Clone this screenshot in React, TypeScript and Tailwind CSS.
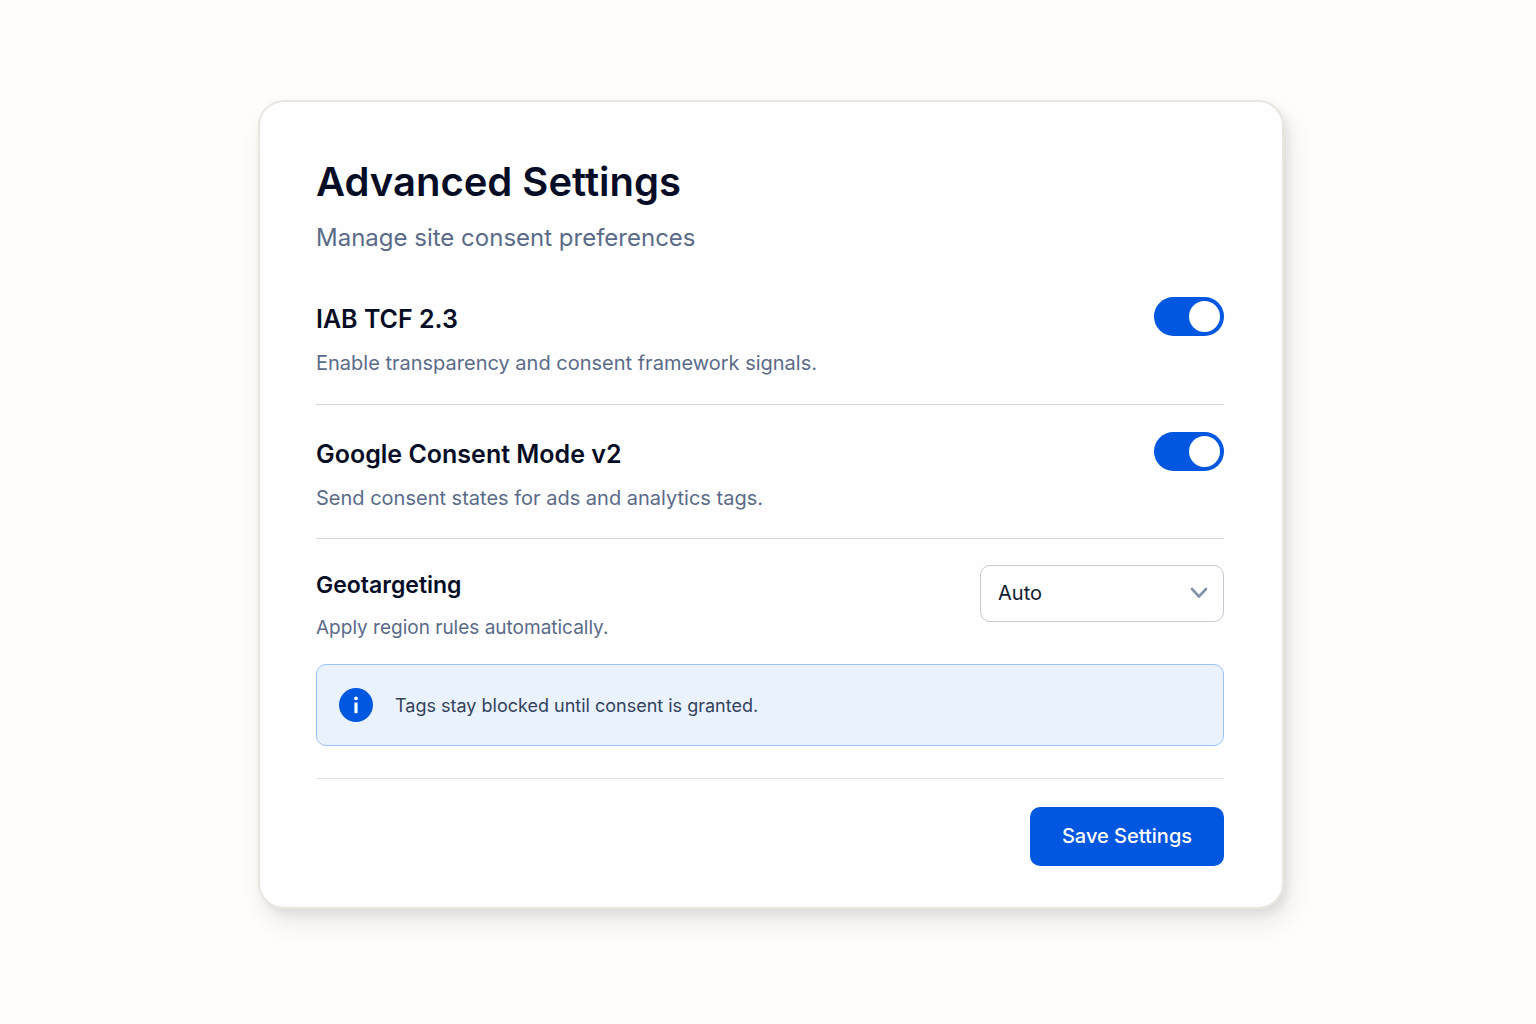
import { useId, useState } from 'react'
import type { ReactNode } from 'react'

const REGION_OPTIONS = ['Auto', 'EU only', 'Worldwide']

interface SettingRowProps {
  id: string
  title: string
  description: string
  compact?: boolean
  className?: string
  children: ReactNode
}

function SettingRow({ id, title, description, compact = false, className = '', children }: SettingRowProps) {
  return (
    <div className={`flex items-start justify-between gap-6 ${className}`}>
      <div className={compact ? 'min-w-0 pt-1' : 'min-w-0 pt-1.5'}>
        <label
          htmlFor={id}
          className={`block leading-8 font-semibold text-[#050d26] ${compact ? 'text-[23px]' : 'text-[25px]'}`}
        >
          {title}
        </label>
        <p
          id={`${id}-description`}
          className={`leading-8 text-[#5a6b89] ${compact ? 'mt-[11px] text-[19px]' : 'mt-3 text-[20px]'}`}
        >
          {description}
        </p>
      </div>
      {children}
    </div>
  )
}

interface ToggleProps {
  id: string
  checked: boolean
  onChange: (checked: boolean) => void
}

function Toggle({ id, checked, onChange }: ToggleProps) {
  return (
    <input
      id={id}
      type="checkbox"
      role="switch"
      aria-describedby={`${id}-description`}
      checked={checked}
      onChange={(event) => onChange(event.target.checked)}
      className="flex h-[39px] w-[70px] shrink-0 cursor-pointer appearance-none items-center rounded-full bg-slate-300 px-1 before:size-[31px] before:rounded-full before:bg-white before:content-[''] checked:justify-end checked:bg-[#0157df]"
    />
  )
}

export default function App() {
  const [tcf, setTcf] = useState(true)
  const [consentMode, setConsentMode] = useState(true)
  const [region, setRegion] = useState('Auto')
  const baseId = useId()

  return (
    <main className="flex min-h-screen items-center justify-center bg-[#fefdfb] py-10 pr-6 pl-[30px] font-['Inter',sans-serif]">
      <form
        onSubmit={(event) => event.preventDefault()}
        className="mb-4 w-full max-w-[1026px] rounded-[26px] border-2 border-[#e9e6df] bg-[#fefefe] pt-14 pr-[58px] pb-[41px] pl-14 shadow-[4px_5px_8px_rgba(40,30,30,0.08),6px_14px_26px_rgba(40,30,30,0.09)]"
      >
        <h1 className="text-[40px] leading-[48px] font-semibold text-[#050d26]">Advanced Settings</h1>
        <p className="mt-3 text-[24px] leading-10 text-[#5a6b89]">Manage site consent preferences</p>

        <SettingRow
          id={`${baseId}-tcf`}
          title="IAB TCF 2.3"
          description="Enable transparency and consent framework signals."
          className="border-b border-[#d3d7dd] pt-[39px] pb-[25px]"
        >
          <Toggle id={`${baseId}-tcf`} checked={tcf} onChange={setTcf} />
        </SettingRow>

        <SettingRow
          id={`${baseId}-gcm`}
          title="Google Consent Mode v2"
          description="Send consent states for ads and analytics tags."
          className="border-b border-[#d3d7dd] pt-[27px] pb-6"
        >
          <Toggle id={`${baseId}-gcm`} checked={consentMode} onChange={setConsentMode} />
        </SettingRow>

        <SettingRow
          id={`${baseId}-geo`}
          title="Geotargeting"
          description="Apply region rules automatically."
          compact
          className="pt-[26px]"
        >
          <div className="grid w-[244px] shrink-0 items-center">
            <select
              id={`${baseId}-geo`}
              aria-describedby={`${baseId}-geo-description`}
              value={region}
              onChange={(event) => setRegion(event.target.value)}
              className="col-start-1 row-start-1 h-[57px] w-full appearance-none rounded-[10px] border border-[#c4c9d1] bg-[#fefefe] px-[17px] text-[20px] text-[#111a33]"
            >
              {REGION_OPTIONS.map((option) => (
                <option key={option}>{option}</option>
              ))}
            </select>
            <svg
              viewBox="0 0 18 12"
              aria-hidden="true"
              className="pointer-events-none col-start-1 row-start-1 mr-4 h-3 w-[18px] justify-self-end"
            >
              <path d="M2 2l7 7.5L16 2" fill="none" stroke="#8294aa" strokeWidth="2.6" strokeLinecap="round" strokeLinejoin="round" />
            </svg>
          </div>
        </SettingRow>

        <div role="note" className="mt-5 flex items-center gap-[22px] rounded-[10px] border border-[#9cc3f8] bg-[#eaf2fe] px-[22px] py-[23px]">
          <svg viewBox="0 0 34 34" aria-hidden="true" className="size-[34px] shrink-0">
            <circle cx="17" cy="17" r="17" fill="#0157df" />
            <circle cx="17" cy="10.3" r="1.9" fill="#fff" />
            <path d="M17 14.5V25.2" stroke="#fff" strokeWidth="3.2" />
          </svg>
          <p className="pt-0.5 text-[18px] leading-7 text-[#33435d]">Tags stay blocked until consent is granted.</p>
        </div>

        <div className="mt-8 flex justify-end border-t border-[#e0e2e5] pt-7">
          <button
            type="submit"
            className="h-[59px] w-[194px] cursor-pointer rounded-[10px] bg-[#0157df] text-[20px] font-medium text-white"
          >
            Save Settings
          </button>
        </div>
      </form>
    </main>
  )
}
